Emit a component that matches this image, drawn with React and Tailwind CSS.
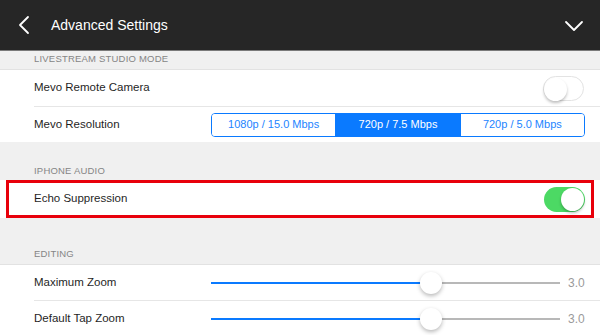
import { useState } from "react";

const Toggle = ({ on }) => (
    <div
        className={`relative w-[41px] h-[25px] rounded-full ${
            on ? "bg-[#4cd964]" : "bg-white border border-[#e3e3e3]"
        }`}
    >
        <div
            className={`absolute top-[1px] w-[23px] h-[23px] rounded-full bg-white shadow-[0_2px_3px_rgba(0,0,0,0.25)] ${
                on ? "right-[1px]" : "left-0 top-0"
            }`}
        />
    </div>
);

const SectionHeader = ({ title, className }) => (
    <div
        className={`flex items-end shrink-0 bg-[#f0f0f0] pl-[34px] text-[9.5px] text-[#858585] tracking-[0.2px] ${className}`}
    >
        {title}
    </div>
);

const Slider = ({ pct }) => (
    <div className="flex items-center flex-1">
        <div className="relative w-[349px] h-[2px] bg-[#b8b8b8]">
            <div className="absolute left-0 top-0 h-[2px] bg-[#0a7aff]" style={{ width: `${pct}%` }} />
            <div
                className="absolute top-1/2 w-[22px] h-[22px] -mt-[11px] -ml-[11px] rounded-full bg-white shadow-[0_2px_4px_rgba(0,0,0,0.28)]"
                style={{ left: `${pct}%` }}
            />
        </div>
        <span className="ml-[8px] text-[12px] text-[#9a9a9a]">3.0</span>
    </div>
);

export default function App() {
    const [res, setRes] = useState(1);
    const options = ["1080p / 15.0 Mbps", "720p / 7.5 Mbps", "720p / 5.0 Mbps"];

    return (
        <div
            className="w-[600px] h-[335px] overflow-hidden bg-[#f0f0f0] flex flex-col"
            style={{ fontFamily: "'Liberation Sans', Arial, sans-serif" }}
        >
            <div className="h-[51px] shrink-0 bg-[#262626] border-b border-[#7a7a7a] flex items-center text-white">
                <svg width="12" height="20" viewBox="0 0 12 20" className="ml-[18px]" fill="none">
                    <path d="M10 2 L2 10 L10 18" stroke="white" strokeWidth="1.8" strokeLinecap="round" strokeLinejoin="round" />
                </svg>
                <span className="ml-[21px] text-[14px]">Advanced Settings</span>
                <svg width="20" height="12" viewBox="0 0 20 12" className="ml-auto mr-[16px] mt-[2px]" fill="none">
                    <path d="M2 2 L10 10 L18 2" stroke="white" strokeWidth="1.8" strokeLinecap="round" strokeLinejoin="round" />
                </svg>
            </div>

            <SectionHeader title="LIVESTREAM STUDIO MODE" className="h-[19px] pb-[3px] border-b border-[#e2e2e2]" />

            <div className="bg-white shrink-0">
                <div className="h-[37px] ml-[34px] pr-[16px] border-b border-[#e6e6e6] flex items-center justify-between">
                    <span className="text-[11.5px] text-[#1f1f1f]">Mevo Remote Camera</span>
                    <Toggle on={false} />
                </div>
                <div className="h-[35px] ml-[34px] pr-[15px] flex items-center justify-between">
                    <span className="text-[11.5px] text-[#1f1f1f]">Mevo Resolution</span>
                    <div className="flex w-[374px] h-[24px] border border-[#0a7aff] rounded-[4px] overflow-hidden">
                        {options.map((o, i) => (
                            <button
                                key={o}
                                onClick={() => setRes(i)}
                                className={`flex-1 text-[11px] ${i > 0 ? "border-l border-[#0a7aff]" : ""} ${
                                    res === i ? "bg-[#0a7aff] text-white" : "bg-white text-[#2384ff]"
                                }`}
                            >
                                {o}
                            </button>
                        ))}
                    </div>
                </div>
            </div>

            <SectionHeader title="IPHONE AUDIO" className="h-[38px] pb-[2px]" />

            <div className="relative bg-white h-[38px] shrink-0">
                <div className="h-full ml-[34px] pr-[15px] flex items-center justify-between">
                    <span className="text-[11.5px] text-[#1f1f1f]">Echo Suppression</span>
                    <Toggle on={true} />
                </div>
                <div className="absolute left-[6px] right-[6px] top-0 bottom-0 border-[3px] border-[#e8000b] pointer-events-none" />
            </div>

            <SectionHeader title="EDITING" className="h-[47px] pb-[3px] border-b border-[#e2e2e2]" />

            <div className="bg-white shrink-0">
                <div className="h-[36px] ml-[34px] border-b border-[#e6e6e6] flex items-center">
                    <span className="w-[177px] text-[11.5px] text-[#1f1f1f]">Maximum Zoom</span>
                    <Slider pct={63} />
                </div>
                <div className="h-[36px] ml-[34px] flex items-center">
                    <span className="w-[177px] text-[11.5px] text-[#1f1f1f]">Default Tap Zoom</span>
                    <Slider pct={63} />
                </div>
            </div>
        </div>
    );
}
